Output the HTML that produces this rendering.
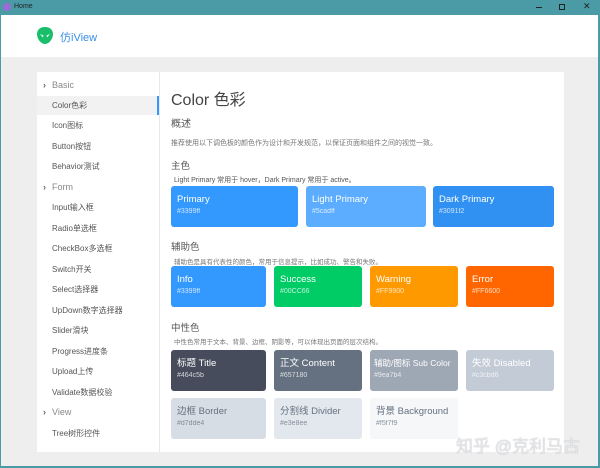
<!DOCTYPE html>
<html><head><meta charset="utf-8"><style>
*{margin:0;padding:0;box-sizing:border-box}
body{width:600px;height:468px;overflow:hidden;background:#4b9ba6;font-family:"Liberation Sans","Noto Sans CJK SC",sans-serif;position:relative}
.abs{position:absolute}
.win{left:1px;top:15px;width:597px;height:451px;background:#eeeeee}
.hdr{left:0;top:0;width:597px;height:42px;background:#fff}
.card{left:36px;top:57px;width:527px;height:380px;background:#fff}
.side{left:0;top:0;width:122px;height:380px}
.sep{left:122px;top:0;width:1px;height:380px;background:#e8e8e8}
.it{position:absolute;left:15px;font-size:8px;color:#555;white-space:nowrap}
.grp{position:absolute;left:6px;font-size:9px;color:#888}
.grp b{font-weight:bold;color:#666;margin-right:6px}
.t{position:absolute;color:#555;white-space:nowrap}
.bx{position:absolute;border-radius:3px;color:#fff;padding:7px 6px;white-space:nowrap;overflow:hidden}
.bx .n{font-size:9.5px;line-height:13px}
.bx .c{font-size:7px;opacity:.75;margin-top:2px}
</style></head><body>
<div class="abs" style="left:3px;top:3px;width:8px;height:8px;border-radius:50%;background:#9a6cd8"></div>
<div class="abs" style="left:14px;top:3px;font-size:7px;color:#222">Home</div>
<div class="abs" style="left:536px;top:7px;width:6px;height:1px;background:#222"></div>
<div class="abs" style="left:559px;top:4px;width:6px;height:6px;border:1px solid #222"></div>
<div class="abs" style="left:583px;top:1px;font-size:9px;color:#222">✕</div>
<div class="abs win">
 <div class="abs hdr">
  <svg class="abs" style="left:35px;top:11px" width="18" height="20" viewBox="0 0 18 20"><path d="M9 1C4 1 1 4 1 8c0 5 4 10 8 10s8-5 8-10c0-4-3-7-8-7z" fill="#19be6b"/><path d="M4 8l3.5 1.5-0.5 2zM14 8l-3.5 1.5 0.5 2z" fill="#fff"/></svg>
  <div class="abs" style="left:59px;top:14px;font-size:11px;color:#3a8ee6">仿iView</div>
 </div>
 <div class="abs card">
  <div class="abs side">
   <div class="abs" style="left:0;top:24px;width:122px;height:19px;background:#f2f2f2"></div>
   <div class="abs" style="left:120px;top:24px;width:2px;height:19px;background:#3399ff"></div>
   <div class="grp" style="top:8px"><b>›</b>Basic</div>
   <div class="it" style="top:28px">Color色彩</div>
   <div class="it" style="top:48px">Icon图标</div>
   <div class="it" style="top:69px">Button按钮</div>
   <div class="it" style="top:89px">Behavior测试</div>
   <div class="grp" style="top:110px"><b>›</b>Form</div>
   <div class="it" style="top:130px">Input输入框</div>
   <div class="it" style="top:151px">Radio单选框</div>
   <div class="it" style="top:171px">CheckBox多选框</div>
   <div class="it" style="top:192px">Switch开关</div>
   <div class="it" style="top:212px">Select选择器</div>
   <div class="it" style="top:233px">UpDown数字选择器</div>
   <div class="it" style="top:253px">Slider滑块</div>
   <div class="it" style="top:274px">Progress进度条</div>
   <div class="it" style="top:294px">Upload上传</div>
   <div class="it" style="top:315px">Validate数据校验</div>
   <div class="grp" style="top:335px"><b>›</b>View</div>
   <div class="it" style="top:356px">Tree树形控件</div>
  </div>
  <div class="abs sep"></div>
  <div class="t" style="left:134px;top:14px;font-size:16px;color:#444">Color 色彩</div>
  <div class="t" style="left:134px;top:43px;font-size:10px">概述</div>
  <div class="t" style="left:134px;top:66px;font-size:7px;color:#777">推荐使用以下调色板的颜色作为设计和开发规范，以保证页面和组件之间的视觉一致。</div>
  <div class="t" style="left:134px;top:86px;font-size:9.5px">主色</div>
  <div class="t" style="left:137px;top:103px;font-size:7px">Light Primary 常用于 hover，Dark Primary 常用于 active。</div>
  <div class="bx" style="left:134px;top:114px;width:127px;height:41px;background:#3399ff"><div class="n">Primary</div><div class="c">#3399ff</div></div>
  <div class="bx" style="left:269px;top:114px;width:120px;height:41px;background:#5cadff"><div class="n">Light Primary</div><div class="c">#5cadff</div></div>
  <div class="bx" style="left:396px;top:114px;width:121px;height:41px;background:#3091f2"><div class="n">Dark Primary</div><div class="c">#3091f2</div></div>
  <div class="t" style="left:134px;top:167px;font-size:9.5px">辅助色</div>
  <div class="t" style="left:137px;top:184px;font-size:6.5px;color:#777">辅助色是具有代表性的颜色，常用于信息提示，比如成功、警告和失败。</div>
  <div class="bx" style="left:134px;top:194px;width:95px;height:41px;background:#3399ff"><div class="n">Info</div><div class="c">#3399ff</div></div>
  <div class="bx" style="left:237px;top:194px;width:88px;height:41px;background:#00cc66"><div class="n">Success</div><div class="c">#00CC66</div></div>
  <div class="bx" style="left:333px;top:194px;width:88px;height:41px;background:#ff9900"><div class="n">Warning</div><div class="c">#FF9900</div></div>
  <div class="bx" style="left:429px;top:194px;width:88px;height:41px;background:#ff6600"><div class="n">Error</div><div class="c">#FF6600</div></div>
  <div class="t" style="left:134px;top:248px;font-size:9.5px">中性色</div>
  <div class="t" style="left:137px;top:264px;font-size:6.5px;color:#777">中性色常用于文本、背景、边框、阴影等，可以体现出页面的层次结构。</div>
  <div class="bx" style="left:134px;top:278px;width:95px;height:41px;background:#464c5b"><div class="n">标题 Title</div><div class="c">#464c5b</div></div>
  <div class="bx" style="left:237px;top:278px;width:88px;height:41px;background:#657180"><div class="n">正文 Content</div><div class="c">#657180</div></div>
  <div class="bx" style="left:333px;top:278px;width:88px;height:41px;background:#9ea7b4;padding-left:4px"><div class="n" style="font-size:8.5px">辅助/图标 Sub Color</div><div class="c">#9ea7b4</div></div>
  <div class="bx" style="left:429px;top:278px;width:88px;height:41px;background:#c3cbd6"><div class="n">失效 Disabled</div><div class="c">#c3cbd6</div></div>
  <div class="bx" style="left:134px;top:326px;width:95px;height:41px;background:#d7dde4;color:#657180"><div class="n">边框 Border</div><div class="c">#d7dde4</div></div>
  <div class="bx" style="left:237px;top:326px;width:88px;height:41px;background:#e3e8ee;color:#657180"><div class="n">分割线 Divider</div><div class="c">#e3e8ee</div></div>
  <div class="bx" style="left:333px;top:326px;width:88px;height:41px;background:#f5f7f9;color:#657180"><div class="n">背景 Background</div><div class="c">#f5f7f9</div></div>
 </div>
 <div class="abs" style="left:455px;top:417px;font-size:17px;color:#e4e6ea;text-shadow:0 0 1px #aaa">知乎 @克利马古</div>
</div>
</body></html>
